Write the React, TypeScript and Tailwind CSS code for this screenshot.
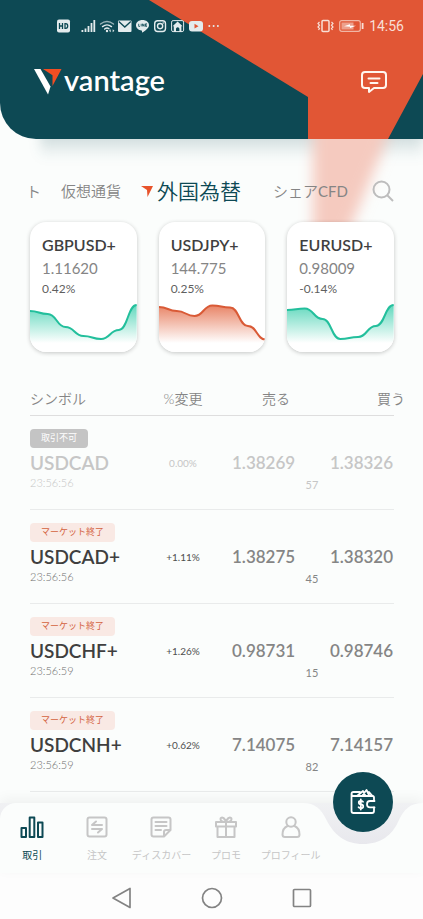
import { useId } from "react";
import { clsx } from "clsx";

interface Card {
  symbol: string;
  price: string;
  change: string;
  points: number[];
  tone: "green" | "orange";
}

interface Quote {
  symbol: string;
  time: string;
  change: string;
  sell: string;
  buy: string;
  spread: string;
  status: string;
  disabled?: boolean;
}

const cards: Card[] = [
  {
    symbol: "GBPUSD+",
    price: "1.11620",
    change: "0.42%",
    points: [11, 14, 27, 36, 39, 30, 5],
    tone: "green",
  },
  {
    symbol: "USDJPY+",
    price: "144.775",
    change: "0.25%",
    points: [7, 11, 16, 5.5, 7.5, 26, 39.5],
    tone: "orange",
  },
  {
    symbol: "EURUSD+",
    price: "0.98009",
    change: "-0.14%",
    points: [10, 8.5, 19, 39, 37, 26, 5],
    tone: "green",
  },
];

const quotes: Quote[] = [
  {
    symbol: "USDCAD",
    time: "23:56:56",
    change: "0.00%",
    sell: "1.38269",
    buy: "1.38326",
    spread: "57",
    status: "取引不可",
    disabled: true,
  },
  {
    symbol: "USDCAD+",
    time: "23:56:56",
    change: "+1.11%",
    sell: "1.38275",
    buy: "1.38320",
    spread: "45",
    status: "マーケット終了",
  },
  {
    symbol: "USDCHF+",
    time: "23:56:59",
    change: "+1.26%",
    sell: "0.98731",
    buy: "0.98746",
    spread: "15",
    status: "マーケット終了",
  },
  {
    symbol: "USDCNH+",
    time: "23:56:59",
    change: "+0.62%",
    sell: "7.14075",
    buy: "7.14157",
    spread: "82",
    status: "マーケット終了",
  },
];

const tones = {
  green: { line: "#23bf9c", fill: "#62d8bd" },
  orange: { line: "#d95a36", fill: "#e88365" },
};

function curve(points: number[]) {
  const step = 107 / (points.length - 1);
  return points.reduce((d, y, i) => {
    if (i === 0) return `M0 ${y}`;
    const mid = (i - 0.5) * step;
    return `${d} C${mid} ${points[i - 1]} ${mid} ${y} ${i * step} ${y}`;
  }, "");
}

function Sparkline({ points, tone }: Pick<Card, "points" | "tone">) {
  const id = useId();
  const d = curve(points);
  return (
    <svg
      className="mt-px block h-[52px] w-full"
      viewBox="0 0 107 52"
      preserveAspectRatio="none"
      aria-hidden="true"
    >
      <defs>
        <linearGradient id={id} x1="0" y1="5" x2="0" y2="43" gradientUnits="userSpaceOnUse">
          <stop offset="0" stopColor={tones[tone].fill} />
          <stop offset="1" stopColor="#fff" />
        </linearGradient>
      </defs>
      <path d={`${d} V52 H0 Z`} fill={`url(#${id})`} />
      <path d={d} fill="none" stroke={tones[tone].line} strokeWidth="2" />
    </svg>
  );
}

/* status bar */
function StatusBar() {
  return (
    <div className="flex h-[52px] items-center justify-between pr-[19px] pl-[57px] text-[#e3ebed]">
      <svg width="164" height="16" viewBox="0 0 164 16" fill="currentColor" aria-hidden="true">
        {/* HD */}
        <rect x="0" y="1.500" width="13" height="13" rx="2" />
        <path d="M2.500 5v6M5.500 5v6M2.500 8h3M8 5.600v4.800h.7q2 0 2-2.400t-2-2.400z" fill="none" stroke="#0d4954" strokeWidth="1.300" />
        {/* signal */}
        <path d="M24.500 12h1.800v2h-1.800zM27.600 10.500h1.800V14h-1.800zM30.600 8h1.800v6h-1.800zM33.600 5h1.800v9h-1.800zM36.400 2h1.800v12h-1.800z" />
        {/* wifi */}
        <g fill="none" stroke="currentColor" strokeWidth="1.400" strokeLinecap="round">
          <path d="M43.500 6q6.500-5 13 0" opacity=".65" />
          <path d="M45.500 8.600q4.500-3.400 9 0M47.600 11q2.400-1.800 4.400-.2" />
        </g>
        <circle cx="50" cy="13" r="1.200" />
        <path d="M52 12.800l1.700-1.500v3zM57.400 12.800l-1.700-1.500v3z" />
        {/* mail */}
        <rect x="61" y="2.500" width="13.500" height="11.500" rx="1" />
        <path d="M61.800 3.500l6 5.600 6-5.600" fill="none" stroke="#0d4954" strokeWidth="1.300" />
        {/* chat balloon */}
        <path d="M85.500 2c3.700 0 6.500 2.200 6.500 5.200 0 3.200-4.600 6-6.500 7.300-.7.400-.3-1.500-.8-2-3.200-.4-5.700-2.400-5.700-5.300C79 4.200 81.800 2 85.500 2z" />
        <path d="M81.700 5.800v2.600h1.300M84.200 5.800v2.600M85.600 8.400V5.800l1.500 2.600V5.800M90 5.800h-1.500v2.600H90M88.500 7.100H90" fill="none" stroke="#0d4954" strokeWidth=".8" />
        {/* camera */}
        <g fill="none" stroke="currentColor" strokeWidth="1.400">
          <rect x="97.700" y="2.700" width="10.800" height="10.800" rx="3" />
          <circle cx="103.100" cy="8.100" r="2.600" />
        </g>
        <circle cx="106.200" cy="5" r=".8" />
        {/* house */}
        <rect x="114.600" y="2.600" width="12" height="11" rx="1.500" fill="none" stroke="currentColor" />
        <path d="M120.600 3.500l5 4.700h-1.200V14h-2v-3.500q-1.700-2.400-3.400 0V14h-2.200V8.200h-1.200z" />
        {/* video */}
        <rect x="132" y="3" width="14" height="10.500" rx="3" />
        <path d="M137.500 5.800l4 2.400-4 2.400z" fill="#e15635" />
        <circle cx="152.300" cy="8" r="1" />
        <circle cx="156.600" cy="8" r="1" />
        <circle cx="160.900" cy="8" r="1" />
      </svg>
      <div className="flex items-center gap-[5px] text-[#f8dfd6]">
        <svg width="17" height="16" viewBox="0 0 17 16" fill="none" stroke="currentColor" aria-hidden="true">
          <rect x="5" y="2.500" width="7" height="11" rx="1" strokeWidth="1.500" />
          <path d="M2.500 4L1 5.500l1.500 1.700L1 9l1.500 1.500L1.500 12M14.500 4L16 5.500l-1.500 1.700L16 9l-1.500 1.500 1 1.500" strokeWidth="1.200" />
        </svg>
        <svg width="25" height="16" viewBox="0 0 25 16" fill="none" aria-hidden="true">
          <rect x=".7" y="2.700" width="20.600" height="10.600" rx="2" stroke="currentColor" strokeOpacity=".7" strokeWidth="1.200" />
          <rect x="2.500" y="4.500" width="12" height="7" fill="currentColor" fillOpacity=".55" />
          <path d="M5 8.300l6-2v1.400h6L11 10V8.700z" fill="#fff" />
          <path d="M23.600 5v6" stroke="currentColor" strokeWidth="1.800" />
        </svg>
        <span className="font-['Roboto',sans-serif] text-sm">14:56</span>
      </div>
    </div>
  );
}

function Header() {
  return (
    <header className="relative">
      {/* soft light falling below the header */}
      <div className="absolute inset-x-0 top-full h-[83px] overflow-hidden" aria-hidden="true">
        <div className="-mt-3 ml-10 h-8 bg-gradient-to-b from-[#0d4954]/25 to-transparent blur-[6px]" />
        <svg className="absolute top-0 right-0" width="160" height="83" viewBox="0 0 160 83">
          <defs>
            <filter id="glow" x="-30%" y="-30%" width="160%" height="160%">
              <feGaussianBlur stdDeviation="7" />
            </filter>
          </defs>
          <path d="M50-30H134L120 10 86 92 76 120H50z" fill="#f5cabf" filter="url(#glow)" />
        </svg>
      </div>
      <div className="relative h-[139px] overflow-hidden rounded-bl-[36px] bg-[#0d4954]">
        <svg className="absolute top-0 right-0" width="274" height="139" viewBox="0 0 274 139" aria-hidden="true">
          <path d="M0 0l159 97v42h80l35-65V0z" fill="#e15635" />
        </svg>
        <div className="relative">
          <StatusBar />
          <div className="flex items-center justify-between pr-[35px] pl-[34px]">
            <div className="flex h-[60px] items-center gap-[2px]">
              <svg width="28" height="26" viewBox="0 0 28 26" aria-hidden="true">
                <path d="M0 0h6.500L16.500 17.500 14 25.500z" fill="#fff" />
                <path d="M9 0h18.500l-9 17V6.200z" fill="#f04e23" />
              </svg>
              <span className="pb-1 font-['Lato',sans-serif] text-[29px] leading-8 font-semibold text-white">
                vantage
              </span>
            </div>
            <button type="button" aria-label="メッセージ" className="text-[#fff5ee]">
              <svg width="28" height="24" viewBox="0 0 28 24" fill="none" stroke="currentColor" strokeWidth="2" strokeLinejoin="round" strokeLinecap="round">
                <path d="M5 2h18q3 0 3 3v10q0 3-3 3H14l-5 4v-4H5q-3 0-3-3V5q0-3 3-3z" />
                <path d="M8.500 8.500h11M10.500 13h7" />
              </svg>
            </button>
          </div>
        </div>
      </div>
    </header>
  );
}

function MarketTabs() {
  return (
    <nav className="relative mt-[33px] flex h-[38px] items-center pr-[29px] pl-[26px] text-[15px] font-[350] whitespace-nowrap text-[#858585]">
      <a href="#spot">ト</a>
      <a href="#crypto" className="ml-5">仮想通貨</a>
      <a href="#forex" aria-current="page" className="ml-5 flex items-center gap-1 text-[21px] text-[#0d4954]">
        <svg width="12" height="12" viewBox="0 0 12 12" aria-hidden="true">
          <path d="M0 1h12L6.500 12 6 5z" fill="#e8532b" />
        </svg>
        外国為替
      </a>
      <a href="#cfd" className="mr-auto ml-8">シェア<span className="font-normal">CFD</span></a>
      <button type="button" aria-label="検索" className="text-[#bdbdbd]">
        <svg width="22" height="22" viewBox="0 0 22 22" fill="none" stroke="currentColor" strokeWidth="2">
          <circle cx="9.500" cy="9.500" r="8" />
          <path d="M15 15l6 6" />
        </svg>
      </button>
    </nav>
  );
}

function QuoteTable() {
  return (
    <table className="w-full table-fixed border-collapse">
      <colgroup>
        <col />
        <col className="w-[62px]" />
        <col className="w-[81px]" />
        <col className="w-[34px]" />
        <col className="w-[65px]" />
      </colgroup>
      <thead>
        <tr className="h-[32px] border-b border-[#dedede] text-sm whitespace-nowrap text-[#858585] *:p-0 *:font-[350]">
          <th className="text-left">シンボル</th>
          <th>%変更</th>
          <th className="text-right"><span className="mr-[5px]">売る</span></th>
          <th aria-label="スプレッド" />
          <th className="text-left"><span className="ml-12">買う</span></th>
        </tr>
      </thead>
      <tbody>
        {quotes.map((q) => (
          <tr
            key={q.symbol}
            className={clsx(
              "h-[94px] border-b border-[#e9ebeb] align-top text-center *:p-0",
              q.disabled ? "text-[#c6c6c6]" : "text-[#858585]",
            )}
          >
            <td className="text-left">
              <span
                className={clsx(
                  "mt-[13px] flex h-[19px] w-fit items-center rounded px-[11px] text-[9px]",
                  q.disabled ? "bg-[#c4c4c4] text-white" : "bg-[#f9e9e4] text-[#d4623f]",
                )}
              >
                {q.status}
              </span>
              <div className={clsx("mt-[3px] text-[19px] leading-6 font-semibold", !q.disabled && "text-[#3f3f3f]")}>
                {q.symbol}
              </div>
              <div className={clsx("text-[11px] leading-4 font-light", !q.disabled && "text-[#6f6f6f]")}>{q.time}</div>
            </td>
            <td className={clsx("pt-[35px]! text-[10px] leading-6", !q.disabled && "text-[#4f4f4f]")}>{q.change}</td>
            <td className="pt-[35px]! pl-[18px]! text-[17px] leading-6 font-semibold">{q.sell}</td>
            <td className="pt-[61px]! text-[11px] leading-4">{q.spread}</td>
            <td className="pt-[35px]! text-[17px] leading-6 font-semibold">{q.buy}</td>
          </tr>
        ))}
      </tbody>
    </table>
  );
}

const navItems = [
  {
    label: "取引",
    active: true,
    icon: (
      <>
        <path d="M.500 12H5v9H.500zM8.700 1.500h4.600V21H8.700zM17 6.500h4.500V21H17z" />
      </>
    ),
  },
  {
    label: "注文",
    icon: (
      <>
        <rect x="1.500" y="1.500" width="19" height="19" rx="2" />
        <path d="M16 9H6l4-3.500M6 13h10l-4 3.500" />
      </>
    ),
  },
  {
    label: "ディスカバー",
    icon: (
      <>
        <path d="M3.500 1.500h15q2 0 2 2V14l-6.500 6.500H3.500q-2 0-2-2v-15q0-2 2-2z" />
        <path d="M20 14h-4q-2 0-2 2v4M5.500 6h11M5.500 10h11M5.500 14h5.500" />
      </>
    ),
  },
  {
    label: "プロモ",
    icon: (
      <>
        <path d="M1 6h20v4.500H1zM2.500 10.500V21h17V10.500M11 6v15" />
        <path d="M11 6C8 6 5.500 5 5.500 3S9.500.5 11 6C12.500.5 16.500 1 16.500 3S14 6 11 6z" />
      </>
    ),
  },
  {
    label: "プロフィール",
    icon: (
      <>
        <circle cx="11" cy="6" r="4.700" />
        <path d="M7.500 10C4 11.500 2.500 15 2.500 18.500q0 2.500 2.500 2.500h12q2.500 0 2.500-2.500C19.500 15 18 11.500 14.500 10" />
      </>
    ),
  },
];

function BottomNav() {
  return (
    <nav className="relative h-[70px]">
      {/* tray with the dip for the round button */}
      <div className="absolute inset-0 flex bg-gradient-to-b from-[#f0f1f3] to-[#e8e8ed] to-60% shadow-[0_-4px_12px_rgba(0,0,0,0.05)]" aria-hidden="true">
        <div className="flex-1 rounded-tl-[16px] bg-[#fbfdfc]" />
        <svg width="120" height="70" viewBox="0 0 120 70">
          <path d="M0 0C12 0 18 6 23 16C31 32 42 41 60 41S89 32 95 19C101 6 107 0 120 0V70H0z" fill="#fbfdfc" />
        </svg>
      </div>
      <div className="relative flex pt-[13px] pr-[100px]">
        {navItems.map((item) => (
          <a
            key={item.label}
            href={`#${item.label}`}
            className={clsx(
              "flex w-0 flex-1 flex-col items-center gap-[9px] text-[10px] leading-4 whitespace-nowrap",
              item.active ? "text-[#0d4954]" : "text-[#c6c6c6]",
            )}
          >
            <svg width="22" height="22" viewBox="0 0 22 22" fill="none" stroke="currentColor" strokeWidth="2" strokeLinejoin="round" strokeLinecap="round" overflow="visible" aria-hidden="true">
              {item.icon}
            </svg>
            {item.label}
          </a>
        ))}
      </div>
      <button
        type="button"
        aria-label="入金"
        className="absolute -top-[31px] right-[30px] flex size-[60px] items-center justify-center rounded-full bg-[#0d4954] text-white"
      >
        <svg width="26" height="26" viewBox="0 0 26 26" fill="none" stroke="currentColor" strokeWidth="1.800" strokeLinejoin="round" strokeLinecap="round">
          <path d="M24 12V8.500q0-1.500-1.500-1.500H3.500Q1.500 7 1.500 5T3.500 3H10M1.500 5v17q0 2 2 2h18.500q2 0 2-2v-3.500" />
          <path d="M7 7l6-5 2 4M13 5.500L16.500 1l2.500 5M19 3l3.500 4" />
          <path d="M24.500 12H20q-3 0-3 3.200t3 3.200h4.500M10.800 10.500v10M13 12.800q-.8-1-2.200-1-2 0-2 1.700t2.200 1.900q2.200.2 2.200 2t-2.200 1.800q-1.600 0-2.400-1" />
        </svg>
      </button>
    </nav>
  );
}

export default function App() {
  return (
    <div className="flex h-screen flex-col overflow-hidden bg-[#fbfdfc] font-['Lato','Noto_Sans_CJK_JP',sans-serif]">
      <Header />
      <main className="min-h-0 flex-1 overflow-hidden">
        <MarketTabs />
        <section className="relative mt-[12px] grid grid-cols-3 gap-[22px] pr-[29px] pl-[30px]">
          {cards.map((card) => (
            <article
              key={card.symbol}
              className="overflow-hidden rounded-2xl bg-white pt-[11px] shadow-[0_1px_4px_rgba(0,0,0,0.22)]"
            >
              <div className="px-3">
                <h2 className="text-base leading-6 font-semibold text-[#3f3f3f]">{card.symbol}</h2>
                <p className="text-[15px] leading-[22px] text-[#858585]">{card.price}</p>
                <p className="text-xs leading-5 text-[#5f5f5f]">{card.change}</p>
              </div>
              <Sparkline points={card.points} tone={card.tone} />
            </article>
          ))}
        </section>
        <section className="mt-[31px] pr-[29px] pl-[30px]">
          <QuoteTable />
        </section>
      </main>
      <BottomNav />
      <footer className="flex h-[46px] items-center justify-center gap-[68px] bg-[#fdfdfd] pt-[3px] text-[#838383]">
        <button type="button" aria-label="戻る">
          <svg width="22" height="22" viewBox="0 0 22 22" fill="none" stroke="currentColor" strokeWidth="1.700" strokeLinejoin="round">
            <path d="M19 1.500v19L2 11z" />
          </svg>
        </button>
        <button type="button" aria-label="ホーム">
          <svg width="22" height="22" viewBox="0 0 22 22" fill="none" stroke="currentColor" strokeWidth="1.700">
            <circle cx="11" cy="11" r="9.500" />
          </svg>
        </button>
        <button type="button" aria-label="アプリ履歴">
          <svg width="22" height="22" viewBox="0 0 22 22" fill="none" stroke="currentColor" strokeWidth="1.700">
            <rect x="2.500" y="2.500" width="17" height="17" rx="1" />
          </svg>
        </button>
      </footer>
    </div>
  );
}
